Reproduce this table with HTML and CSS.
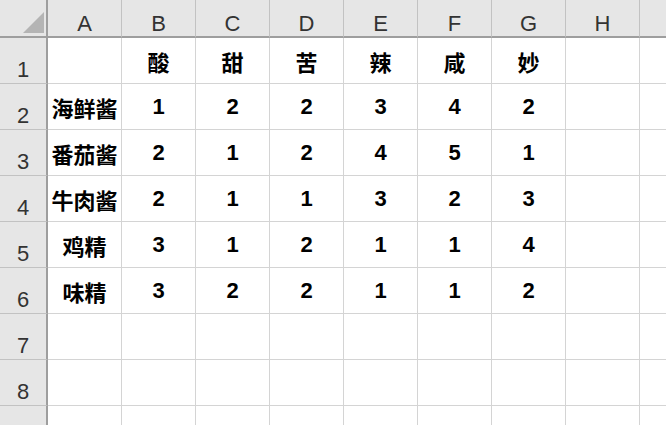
FILE: index.html
```html
<!DOCTYPE html>
<html>
<head>
<meta charset="utf-8">
<link rel="stylesheet" href="styles.css">
</head>
<body>
<div class="sheet">
  <div class="corner"><svg width="46" height="36" viewBox="0 0 46 36"><polygon points="44,12 44,33 23,33" fill="#b4b4b4"/></svg></div>
  <div class="ch">A</div><div class="ch">B</div><div class="ch">C</div><div class="ch">D</div><div class="ch">E</div><div class="ch">F</div><div class="ch">G</div><div class="ch">H</div><div class="ch"></div>

  <div class="rh">1</div><div class="c"></div><div class="c">酸</div><div class="c">甜</div><div class="c">苦</div><div class="c">辣</div><div class="c">咸</div><div class="c">妙</div><div class="c"></div><div class="c"></div>
  <div class="rh">2</div><div class="c">海鲜酱</div><div class="c">1</div><div class="c">2</div><div class="c">2</div><div class="c">3</div><div class="c">4</div><div class="c">2</div><div class="c"></div><div class="c"></div>
  <div class="rh">3</div><div class="c">番茄酱</div><div class="c">2</div><div class="c">1</div><div class="c">2</div><div class="c">4</div><div class="c">5</div><div class="c">1</div><div class="c"></div><div class="c"></div>
  <div class="rh">4</div><div class="c">牛肉酱</div><div class="c">2</div><div class="c">1</div><div class="c">1</div><div class="c">3</div><div class="c">2</div><div class="c">3</div><div class="c"></div><div class="c"></div>
  <div class="rh">5</div><div class="c">鸡精</div><div class="c">3</div><div class="c">1</div><div class="c">2</div><div class="c">1</div><div class="c">1</div><div class="c">4</div><div class="c"></div><div class="c"></div>
  <div class="rh">6</div><div class="c">味精</div><div class="c">3</div><div class="c">2</div><div class="c">2</div><div class="c">1</div><div class="c">1</div><div class="c">2</div><div class="c"></div><div class="c"></div>
  <div class="rh">7</div><div class="c"></div><div class="c"></div><div class="c"></div><div class="c"></div><div class="c"></div><div class="c"></div><div class="c"></div><div class="c"></div><div class="c"></div>
  <div class="rh">8</div><div class="c"></div><div class="c"></div><div class="c"></div><div class="c"></div><div class="c"></div><div class="c"></div><div class="c"></div><div class="c"></div><div class="c"></div>
  <div class="rh"></div><div class="c"></div><div class="c"></div><div class="c"></div><div class="c"></div><div class="c"></div><div class="c"></div><div class="c"></div><div class="c"></div><div class="c"></div>
</div>
</body>
</html>
```
FILE: styles.css
```css
html, body {
  margin: 0;
  padding: 0;
  background: #ffffff;
}
.sheet {
  width: 666px;
  height: 425px;
  overflow: hidden;
  display: grid;
  grid-template-columns: 48px repeat(9, 74px);
  grid-template-rows: 38px repeat(9, 46px);
  font-family: "Liberation Sans", "Noto Sans CJK SC", sans-serif;
}
.sheet > div {
  box-sizing: border-box;
}
.corner {
  background: #e6e6e6;
  border-right: 2px solid #9e9e9e;
  border-bottom: 2px solid #9e9e9e;
}
.corner svg {
  display: block;
}
.ch {
  background: #e6e6e6;
  border-right: 1px solid #c2c2c2;
  border-bottom: 2px solid #9e9e9e;
  display: flex;
  align-items: flex-end;
  justify-content: center;
  font-size: 22px;
  line-height: 22px;
  color: #333333;
  padding-bottom: 1px;
}
.rh {
  background: #e6e6e6;
  border-right: 2px solid #9e9e9e;
  border-bottom: 1px solid #c2c2c2;
  display: flex;
  align-items: flex-end;
  justify-content: center;
  font-size: 22px;
  line-height: 22px;
  color: #333333;
  padding-bottom: 2px;
}
.c {
  border-right: 1px solid #d4d4d4;
  border-bottom: 1px solid #d4d4d4;
  display: flex;
  align-items: center;
  justify-content: center;
  font-size: 22px;
  font-weight: bold;
  color: #000000;
  white-space: nowrap;
}
```
